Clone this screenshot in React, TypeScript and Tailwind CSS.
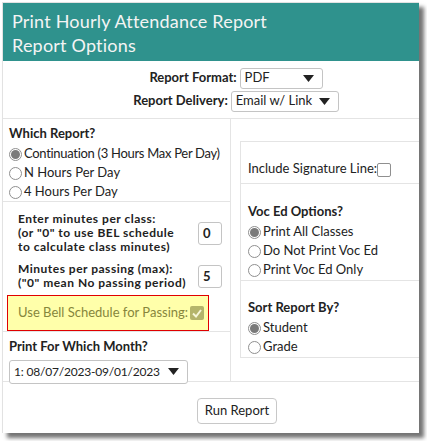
const font = { fontFamily: "Lato, 'Open Sans', sans-serif" };

const Radio = ({ checked }: { checked?: boolean }) => (
  <span className="inline-flex w-[13px] h-[13px] rounded-full border border-[#8f8f8f] bg-white items-center justify-center shrink-0 mr-[2px]">
    {checked && <span className="w-[9px] h-[9px] rounded-full bg-[#7a7a7a]" />}
  </span>
);

const RadioRow = ({ label, checked }: { label: string; checked?: boolean }) => (
  <div className="flex items-center h-[19px] whitespace-nowrap">
    <Radio checked={checked} />
    <span>{label}</span>
  </div>
);

const Select = ({ value, w, text = "" }: { value: string; w: string; text?: string }) => (
  <div className={`${w} h-[21px] border border-[#c4c4c4] rounded-[3px] bg-white flex items-center justify-between pl-[4px] pr-[8px] font-normal whitespace-nowrap`}>
    <span className={text}>{value}</span>
    <svg width="11" height="7" viewBox="0 0 11 7" className="shrink-0">
      <path d="M0 0 L11 0 L5.5 7 Z" fill="#222" />
    </svg>
  </div>
);

const NumBox = ({ value }: { value: string }) => (
  <div className="w-[24px] h-[23px] border border-[#c4c4c4] rounded-[3px] bg-white flex items-center pl-[4px] font-bold text-[13px]">
    {value}
  </div>
);

export default function App() {
  return (
    <div className="w-[427px] h-[441px] bg-white pt-[2px] pl-[2px]" style={font}>
      <div className="w-[417px] h-[431px] bg-white border-t border-l border-[#e2e2e2] shadow-[5px_5px_4px_rgba(0,0,0,0.55)] flex flex-col text-[13px] text-[#222]">
        <div className="h-[58px] bg-[#2f928d] text-[#f4f4f4] text-[18px] leading-[24px] pl-[9px] pt-[6px] tracking-[0.2px]">
          <div>Print Hourly Attendance Report</div>
          <div>Report Options</div>
        </div>

        <div className="h-[58px] flex flex-col items-center justify-center gap-[2px] pl-[50px] border-b border-[#e4e4e4]">
          <div className="flex items-center gap-[3px]">
            <span className="font-bold">Report Format:</span>
            <Select value="PDF" w="w-[83px]" />
          </div>
          <div className="flex items-center gap-[3px]">
            <span className="font-bold">Report Delivery:</span>
            <Select value="Email w/ Link" w="w-[108px]" />
          </div>
        </div>

        <div className="flex h-[263px] border-b border-[#e4e4e4]">
          <div className="w-[228px] border-r border-[#e4e4e4] flex flex-col">
            <div className="h-[83px] border-b border-[#e4e4e4] pl-[6px] pt-[5px]">
              <div className="font-bold mb-[1px]">Which Report?</div>
              <div className="tracking-[-0.3px]">
                <RadioRow label="Continuation (3 Hours Max Per Day)" checked />
              </div>
              <RadioRow label="N Hours Per Day" />
              <RadioRow label="4 Hours Per Day" />
            </div>
            <div className="h-[130px] border-b border-[#e4e4e4] pt-[10px]">
              <div className="flex items-center justify-between pl-[15px] pr-[8px] font-bold text-[12px] leading-[14px] tracking-[0.5px] whitespace-nowrap">
                <div>
                  <div>Enter minutes per class:</div>
                  <div>(or "0" to use BEL schedule</div>
                  <div>to calculate class minutes)</div>
                </div>
                <NumBox value="0" />
              </div>
              <div className="flex items-center justify-between pl-[15px] pr-[8px] font-bold text-[12px] leading-[14px] tracking-[0.5px] mt-[8px] whitespace-nowrap">
                <div>
                  <div>Minutes per passing (max):</div>
                  <div>("0" mean No passing period)</div>
                </div>
                <NumBox value="5" />
              </div>
              <div className="ml-[4px] mt-[5px] w-[202px] h-[36px] border border-[#e00000] bg-[#ffffaa] flex items-center pl-[10px] text-[#86863c] whitespace-nowrap">
                <span>Use Bell Schedule for Passing:</span>
                <span className="ml-[2px] w-[14px] h-[14px] rounded-[2px] bg-[#b4b46a] flex items-center justify-center">
                  <svg width="10" height="9" viewBox="0 0 10 9">
                    <path d="M1 4.5 L4 7.5 L9 1" stroke="#f6f6d8" strokeWidth="2" fill="none" />
                  </svg>
                </span>
              </div>
            </div>
            <div className="pl-[6px] pt-[5px]">
              <div className="font-bold mb-[3px]">Print For Which Month?</div>
              <Select value="1: 08/07/2023-09/01/2023" w="w-[179px] h-[24px]" text="text-[12px] tracking-[-0.2px]" />
            </div>
          </div>

          <div className="flex-1 pl-[9px] pt-[22px]">
            <div className="border-t border-l border-b border-[#e4e4e4] flex flex-col">
              <div className="h-[42px] border-b border-[#e4e4e4] flex items-end pb-[5px] pl-[7px] whitespace-nowrap">
                <span>Include Signature Line:</span>
                <span className="w-[14px] h-[14px] border border-[#8f8f8f] rounded-[2px] bg-white mb-[1px]" />
              </div>
              <div className="h-[97px] border-b border-[#e4e4e4] pl-[7px] pt-[18px]">
                <div className="font-bold mb-[1px]">Voc Ed Options?</div>
                <RadioRow label="Print All Classes" checked />
                <RadioRow label="Do Not Print Voc Ed" />
                <RadioRow label="Print Voc Ed Only" />
              </div>
              <div className="h-[76px] pl-[7px] pt-[17px]">
                <div className="font-bold mb-[1px]">Sort Report By?</div>
                <RadioRow label="Student" checked />
                <RadioRow label="Grade" />
              </div>
            </div>
          </div>
        </div>

        <div className="flex-1 flex justify-center items-start pt-[16px] pl-[52px]">
          <button className="h-[26px] px-[7px] border border-[#c8c8c8] rounded-[4px] bg-white text-[13px]">
            Run Report
          </button>
        </div>
      </div>
    </div>
  );
}
